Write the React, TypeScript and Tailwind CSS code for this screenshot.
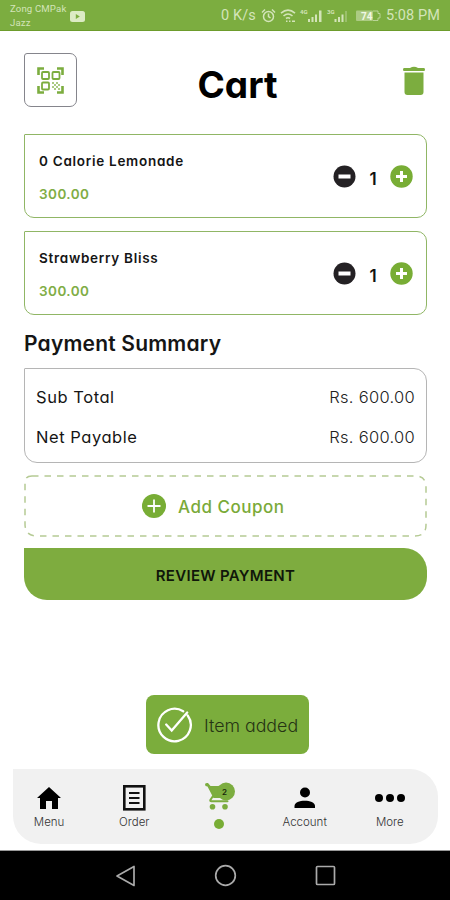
import React from "react";

const GREEN = "#7cad3f";

function StatusBar() {
  return (
    <div className="flex h-[31px] shrink-0 border-b border-[#6d9c2c] bg-[#7cad40] font-[Roboto,sans-serif] text-[#d3e4b9]">
      <div className="flex w-[221px] pl-[10px]">
        <div className="w-[60px] whitespace-nowrap pt-[2px] text-[9.6px] leading-[13.5px] tracking-[0.15px]">
          <div>Zong CMPak</div>
          <div>Jazz</div>
        </div>
        <svg className="mt-[11px] h-[11px] w-[15px]" viewBox="0 0 15 11">
          <rect width="15" height="11" rx="2.5" fill="#dcebc4" />
          <path d="M5.8 3v5l4-2.500z" fill={GREEN} />
        </svg>
      </div>
      <span className="w-[38px] whitespace-nowrap pt-[6px] text-[14.5px] leading-5 tracking-[0.1px]">0 K/s</span>
      <svg className="mt-[6px] h-5 w-[126px]" viewBox="259 6 126 20" fill="none" stroke="#d3e4b9">
        <circle cx="268.500" cy="16.500" r="5" strokeWidth="1.500" />
        <path d="M268.500 13.500v3l2 1.500M262 12.500l3-3M275 12.500l-3-3" strokeWidth="1.500" />
        <path d="M281 13.200q7-6 14 0M283.500 16q4.500-4 9 0M286 18.500q2-1.500 4 0" strokeWidth="1.600" />
        <path d="M286 21.200h1.500M289 21.200h1.500M292 21.200h3" strokeWidth="1.500" />
        <g stroke="none" fill="#d3e4b9">
          <text x="300" y="14" fontSize="6" fontWeight="700">4G</text>
          <path d="M308 19h2v3h-2zM311.500 17h2v5h-2zM315 14.500h2v7.500h-2zM319 10.500h2.500v11.500H319z" />
          <text x="327" y="14" fontSize="6" fontWeight="700">3G</text>
          <path d="M334.500 19h2v3h-2zM338 17h2v5h-2zM341.500 14.500h2v7.500h-2z" />
          <path d="M345 11h2v11h-2z" opacity=".35" />
          <rect x="356" y="10.500" width="17" height="10.500" rx="1" opacity=".55" />
          <text x="361" y="20" fontSize="10" fontWeight="700" fill="#f1f8e4">74</text>
        </g>
        <path d="M373 11h5v2.500h2v4.500h-2v2.500h-5" strokeWidth="1" opacity=".7" />
      </svg>
      <span className="whitespace-nowrap pl-[1px] pt-[6px] text-[14.5px] leading-5 tracking-[0.1px]">5:08 PM</span>
    </div>
  );
}

function QrTile() {
  return (
    <div className="flex h-[54px] w-[53px] items-center justify-center rounded-[7px] rounded-tl-[3px] border-[1.5px] border-[#85858c]">
      <svg className="h-[27px] w-[27px]" viewBox="0 0 27 27" fill="none" stroke={GREEN}>
        <path d="M1.500 8V1.500H7M20 1.500h5.500V8M1.500 19v6.500H7M20 25.500h5.500V19" strokeWidth="2.600" />
        <rect x="5" y="5" width="7" height="7" rx="1" strokeWidth="1.800" />
        <rect x="15.500" y="5" width="7" height="7" rx="1" strokeWidth="1.800" />
        <rect x="5" y="15.500" width="7" height="7" rx="1" strokeWidth="1.800" />
        <path d="M15 16h2M19 16h2M17 18h2M21 18h2M15 20h2M19 20h2M17 22h2M21 22h2" strokeWidth="1.800" opacity=".65" />
      </svg>
    </div>
  );
}

function CartItem({ name, price }: { name: string; price: string }) {
  return (
    <div className="flex h-[84px] shrink-0 rounded-[10px] rounded-tl-[1px] border-[1.5px] border-[#90b665] pl-[14px] pr-[13px]">
      <div className="flex-1 whitespace-nowrap pt-[16px]">
        <div className="text-[13.5px] font-semibold leading-5 tracking-[0.72px] text-[#151515]">{name}</div>
        <div className="mt-[13px] text-[13.5px] font-semibold leading-5 tracking-[0.45px] text-[#80ad45]">{price}</div>
      </div>
      <div className="flex h-[82px] items-center">
        <svg className="h-[23px] w-[23px]" viewBox="0 0 23 23">
          <circle cx="11.500" cy="11.500" r="11" fill="#242124" />
          <rect x="5.500" y="9.500" width="12" height="4" fill="#fff" />
        </svg>
        <span className="mt-[5px] w-[34px] text-center text-[17px] font-semibold leading-5 text-[#111]">1</span>
        <svg className="h-[23px] w-[23px]" viewBox="0 0 23 23">
          <circle cx="11.500" cy="11.500" r="11.200" fill="#78ad35" />
          <path d="M6 11.500h11M11.500 6v11" stroke="#fff" strokeWidth="3" />
        </svg>
      </div>
    </div>
  );
}

function SummaryRow({ label, value }: { label: string; value: string }) {
  return (
    <div className="flex h-10 items-center justify-between whitespace-nowrap text-[16.5px] leading-5">
      <span className="tracking-[0.55px] text-[#151515]">{label}</span>
      <span className="-mr-[1px] font-light tracking-[0.3px] text-[#222]">{value}</span>
    </div>
  );
}

function NavItem({ label, children }: { label: string; children: React.ReactNode }) {
  return (
    <div className="flex w-[85.2px] shrink-0 flex-col items-center">
      <svg className="mt-[14px] h-[30px] w-[34px]" viewBox="0 0 34 30">{children}</svg>
      <span className="mt-[1px] text-[11.5px] font-light leading-4 text-[#333]">{label}</span>
    </div>
  );
}

export default function App() {
  return (
    <div className="flex h-[900px] w-[450px] flex-col overflow-hidden bg-white font-[Inter,sans-serif] [font-feature-settings:'cv11']">
      <StatusBar />
      <header className="flex h-[103px] shrink-0 items-start justify-between pl-6 pr-[25px] pt-[22px]">
        <QrTile />
        <h1 className="mt-[10px] w-[85px] whitespace-nowrap text-[37px] font-bold leading-[44px] text-black">Cart</h1>
        <svg className="mt-[13px] h-[29px] w-[22px]" viewBox="0 0 22 29" fill={GREEN}>
          <path d="M1 2h6Q11-.5 15 2h6q1 0 1 1.500T21 5H1Q0 5 0 3.500T1 2zM1.500 6.500h19V26q0 3-3 3h-13q-3 0-3-3z" />
        </svg>
      </header>

      <main className="flex w-[427px] shrink-0 flex-col pl-6">
        <div className="flex flex-col gap-[13px]">
          <CartItem name="0 Calorie Lemonade" price="300.00" />
          <CartItem name="Strawberry Bliss" price="300.00" />
        </div>
        <h2 className="mt-[14px] h-[39px] whitespace-nowrap text-[21px] font-semibold leading-[29px] tracking-[0.2px] text-[#151515]">Payment Summary</h2>
        <section className="h-[95px] rounded-[13px] rounded-tl-[1px] border-[1.5px] border-[#b5b5b5] pl-[11px] pr-3 pt-[8px]">
          <SummaryRow label="Sub Total" value="Rs. 600.00" />
          <SummaryRow label="Net Payable" value="Rs. 600.00" />
        </section>
        <button className="relative mt-3 flex h-[62px] items-center pl-[118px] text-[17px] font-medium tracking-[0.5px] text-[#7aaa38]">
          <svg className="absolute inset-0 h-full w-full" viewBox="0 0 403 62" fill="none">
            <path d="M8 1H391Q402 1 402 12V50Q402 61 391 61H13Q1 61 1 49V7Q1 1 8 1z" stroke="#b5ca94" strokeWidth="1.500" strokeDasharray="6.500 6" />
          </svg>
          <svg className="h-6 w-6" viewBox="0 0 24 24">
            <circle cx="12" cy="12" r="12" fill="#78ad35" />
            <path d="M5.500 12h13M12 5.500v13" stroke="#fff" strokeWidth="1.800" />
          </svg>
          <span className="ml-[12px] mt-[3px] whitespace-nowrap">Add Coupon</span>
        </button>
        <button className="mt-[11px] h-[52px] whitespace-nowrap rounded-bl-[23px] rounded-r-[23px] bg-[#7eac3f] pt-[4px] text-[15px] font-semibold tracking-[0.3px] text-[#10170a]">
          REVIEW PAYMENT
        </button>
      </main>

      <div className="ml-[146px] mt-[95px] flex h-[59px] w-[163px] shrink-0 items-center rounded-[8px] bg-[#7bad3c] pl-[11px]">
        <svg className="h-9 w-9" viewBox="0 0 36 36" fill="none" stroke="#fff" strokeWidth="2.300" strokeLinecap="round">
          <path d="M31.500 9A16.200 16.200 0 1 1 27 4.800M10 18l5.500 6L31 6" transform="translate(-.8 -.5)" />
        </svg>
        <span className="ml-[11px] mt-[4px] whitespace-nowrap text-[17.8px] font-light text-[#263414]">Item added</span>
      </div>

      <nav className="ml-[13px] mt-[15px] flex h-[75px] w-[425px] shrink-0 rounded-bl-[28px] rounded-r-[28px] bg-[#f1f1f1]">
        <div className="-ml-[6.5px] flex shrink-0">
          <NavItem label="Menu">
            <path d="M11 26v-8h6v8h6V15h3L14 4 2 15h3v11z" transform="translate(3)" />
          </NavItem>
          <NavItem label="Order">
            <rect x="7.300" y="3.300" width="20" height="23" fill="none" stroke="#111" strokeWidth="2.600" />
            <path d="M12 10h10.500M12 15h10.500M12 20h10.500" stroke="#111" strokeWidth="2" />
          </NavItem>
          <div className="flex w-[85.2px] shrink-0 flex-col items-center">
            <svg className="mt-[12px] h-[31px] w-[34px]" viewBox="0 0 34 31" fill={GREEN}>
              <path d="M3 3q1-1.500 3-1l2.500 3H27l-3 12H11.500L5.500 5.500 3.500 5z" />
              <path d="M11 15l-2.800 4.200q0 1 1 1H25.500" fill="none" stroke={GREEN} strokeWidth="2" strokeLinecap="round" />
              <circle cx="24" cy="10.500" r="9" />
              <circle cx="10.500" cy="25.800" r="2.800" />
              <circle cx="23" cy="25.800" r="2.800" />
              <text x="20" y="13.500" fontSize="8" fontWeight="600" fill="#17250a">2</text>
            </svg>
            <span className="mt-[7px] h-[10px] w-[10px] rounded-full bg-[#78ad35]" />
          </div>
          <NavItem label="Account">
            <circle cx="17" cy="9.500" r="5" />
            <path d="M6.500 25v-2c0-7 20.500-7 20.500 0v2z" />
          </NavItem>
          <NavItem label="More">
            <circle cx="6" cy="15" r="4" />
            <circle cx="17" cy="15" r="4" />
            <circle cx="28" cy="15" r="4" />
          </NavItem>
        </div>
      </nav>

      <footer className="mt-[6px] h-[50px] shrink-0 border-t border-[#999] bg-black">
        <svg className="h-[49px] w-[450px]" viewBox="0 0 450 49" fill="none" stroke="#aaa" strokeWidth="1.700" strokeLinejoin="round">
          <path d="M117 25l17-9.500v19z" />
          <circle cx="225.500" cy="24.500" r="9.800" />
          <rect x="316.500" y="15.500" width="18" height="18" rx="1" />
        </svg>
      </footer>
    </div>
  );
}
